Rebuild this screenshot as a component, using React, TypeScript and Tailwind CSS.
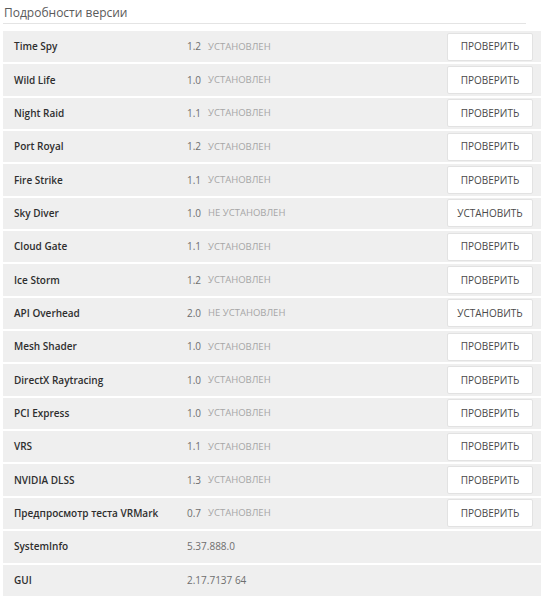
const rows: { name: string; version: string; status?: string; action?: string }[] = [
  { name: "Time Spy", version: "1.2", status: "УСТАНОВЛЕН", action: "ПРОВЕРИТЬ" },
  { name: "Wild Life", version: "1.0", status: "УСТАНОВЛЕН", action: "ПРОВЕРИТЬ" },
  { name: "Night Raid", version: "1.1", status: "УСТАНОВЛЕН", action: "ПРОВЕРИТЬ" },
  { name: "Port Royal", version: "1.2", status: "УСТАНОВЛЕН", action: "ПРОВЕРИТЬ" },
  { name: "Fire Strike", version: "1.1", status: "УСТАНОВЛЕН", action: "ПРОВЕРИТЬ" },
  { name: "Sky Diver", version: "1.0", status: "НЕ УСТАНОВЛЕН", action: "УСТАНОВИТЬ" },
  { name: "Cloud Gate", version: "1.1", status: "УСТАНОВЛЕН", action: "ПРОВЕРИТЬ" },
  { name: "Ice Storm", version: "1.2", status: "УСТАНОВЛЕН", action: "ПРОВЕРИТЬ" },
  { name: "API Overhead", version: "2.0", status: "НЕ УСТАНОВЛЕН", action: "УСТАНОВИТЬ" },
  { name: "Mesh Shader", version: "1.0", status: "УСТАНОВЛЕН", action: "ПРОВЕРИТЬ" },
  { name: "DirectX Raytracing", version: "1.0", status: "УСТАНОВЛЕН", action: "ПРОВЕРИТЬ" },
  { name: "PCI Express", version: "1.0", status: "УСТАНОВЛЕН", action: "ПРОВЕРИТЬ" },
  { name: "VRS", version: "1.1", status: "УСТАНОВЛЕН", action: "ПРОВЕРИТЬ" },
  { name: "NVIDIA DLSS", version: "1.3", status: "УСТАНОВЛЕН", action: "ПРОВЕРИТЬ" },
  { name: "Предпросмотр теста VRMark", version: "0.7", status: "УСТАНОВЛЕН", action: "ПРОВЕРИТЬ" },
  { name: "SystemInfo", version: "5.37.888.0" },
  { name: "GUI", version: "2.17.7137 64" },
];

export default function App() {
  return (
    <div className="min-h-[600px] bg-white pl-[3px] pt-[5px] font-['Open_Sans',sans-serif]">
      {/* Header */}
      <div className="mr-[25px] border-b border-[#e4e4e4] pb-[3px]">
        <h2 className="pl-[1px] text-[12px] leading-[15px] font-normal text-[#5a5a5a]">Подробности версии</h2>
      </div>

      {/* Version table */}
      <div className="mt-[7px] w-[538px]">
        {rows.map((r) => (
          <div key={r.name} className="mb-[2px] flex h-[31.35px] items-center bg-[#efefef]">
            <div className="w-[184px] shrink-0 pl-[11px] text-[10px] font-semibold text-[#2e2e2e]">{r.name}</div>
            <div className="flex items-center text-[10px] text-[#6e6e6e]">
              <span>{r.version}</span>
              {r.status && <span className="ml-[7px] text-[9.5px] text-[#a6a6a6]">{r.status}</span>}
            </div>
            {r.action && (
              <button className="mr-[8px] ml-auto h-[28px] w-[86px] rounded-[2px] border border-[#e2e2e2] bg-white text-[10px] text-[#4a4a4a]">
                {r.action}
              </button>
            )}
          </div>
        ))}
      </div>
    </div>
  );
}
